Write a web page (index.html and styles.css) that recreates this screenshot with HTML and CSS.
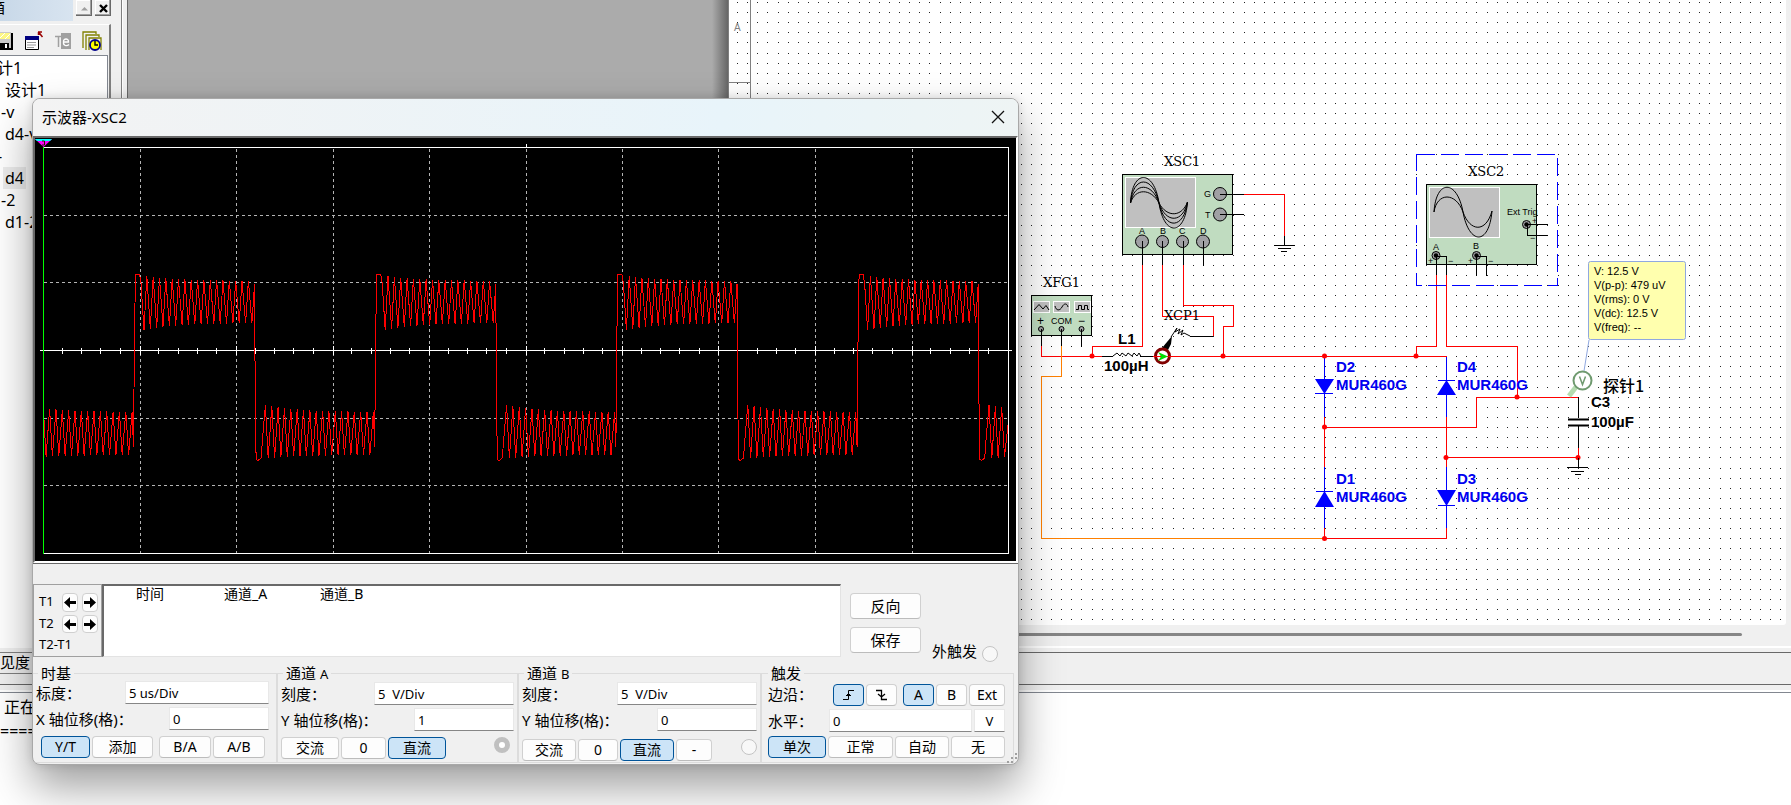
FILE: index.html
```html
<!DOCTYPE html>
<html lang="zh-CN">
<head>
<meta charset="utf-8">
<title>示波器-XSC2</title>
<link rel="stylesheet" href="styles.css">
</head>
<body>
<div class="app">
  <div class="main">
    <aside class="dock">
      <div class="dock-caption">
        <span class="dock-title">箱</span>
        <button class="cap-btn" aria-label="收起"><svg width="9" height="5" viewBox="0 0 9 5"><path d="M1 4.500L4.500 1L8 4.500Z" fill="#a0a0a0"/></svg></button>
        <button class="cap-btn" aria-label="关闭"><svg width="9" height="9" viewBox="0 0 9 9"><path d="M1 1L8 8M8 1L1 8" stroke="#000" stroke-width="2.400"/></svg></button>
      </div>
      <div class="dock-body">
        <div class="dock-tools">
          <button class="tool" aria-label="保存"><svg width="18" height="20" viewBox="0 0 18 20"><path d="M0 2H17V19H0Z" fill="#000"/><path d="M0 1H15V17H0Z" fill="#c8c8c8"/><path d="M0 2H14V8H0Z" fill="#fdf884"/><path d="M0 5L3 2M3 8L9 2M9 8L14 3" stroke="#fff"/><path d="M4 12H13V18H4Z" fill="#000"/><path d="M9 13H11V17H9Z" fill="#fff"/></svg></button>
          <button class="tool" aria-label="新建窗口"><svg width="20" height="20" viewBox="0 0 20 20"><path d="M1.500 5.500H14.500V18.500H1.500Z" fill="#fff" stroke="#000"/><path d="M1 5H15V9H1Z" fill="#000080"/><path d="M3 11.500H12M3 14H12M3 16.500H10" stroke="#999"/><path d="M14 1H18M14.500 1V4M14.500 1L18.500 6" stroke="#900" stroke-width="1.500"/></svg></button>
          <button class="tool" aria-label="重命名"><svg width="18" height="20" viewBox="0 0 18 20"><path d="M7 2H17V18H7Z" fill="#a0a0a0"/><path d="M1 5.500H8M4.500 5V16" stroke="#a0a0a0" stroke-width="1.500"/><path d="M9.500 11H14.500C15 7 9 7 9.500 11C9 15 13 15.500 15 13.500" fill="none" stroke="#fff" stroke-width="1.300"/></svg></button>
          <button class="tool" aria-label="历史"><svg width="20" height="20" viewBox="0 0 20 20"><path d="M1 17V1H14V3M4 19V4H17V6M7 19V7H19V19" fill="none" stroke="#808000" stroke-width="1.300"/><circle cx="13" cy="14" r="5" fill="#ff0" stroke="#00008b" stroke-width="1.800"/><path d="M13 10V14H16" fill="none" stroke="#000" stroke-width="1.400"/></svg></button>
        </div>
        <ul class="tree">
          <li class="cut">计1</li>
          <li>设计1</li>
          <li class="edge">-v</li>
          <li>d4-v</li>
          <li class="cut">-</li>
          <li><span class="picked">d4</span></li>
          <li class="edge">-2</li>
          <li>d1-2</li>
        </ul>
      </div>
    </aside>
    <div class="splitter"></div>
    <div class="workspace"></div>
    <section class="sheet">
      <div class="sheet-view">
        <svg class="schematic" viewBox="728 0 1058 625" preserveAspectRatio="xMinYMin slice">
          <path id="dots" fill="#222"/>
          <g class="thin" stroke="#808080"><path d="M750.500 0V120M728 82.500H750M728.500 0V120"/></g>
          <text x="734" y="31" class="zone">A</text>

          <g class="wire">
            <path d="M1244 194.500H1284.500V237M1142.500 265V346.500H1092.500V356M1162.500 265V316.500H1213.500V336M1183.500 265V305.500H1233.500V326.500H1223.500V356"/>
            <path d="M1041.500 346V356.500H1102M1153 356.500H1446.500M1436.500 275V346.500H1416.500V356M1446.500 275V346.500H1517.500V397"/>
            <path d="M1324.500 417V467M1324.500 427.500H1476.500V397.500H1578.500M1446.500 417V467M1446.500 457.500H1578.500V448M1324.500 528V538.500H1446.500V528"/>
          </g>
          <path class="wire orange" d="M1061.500 346V376.500H1041.500V538.500H1324"/>
          <path class="wire blue" d="M1324.500 357V417M1324.500 467V528M1446.500 357V417M1446.500 467V528M1315 393.500H1333M1316 491.500H1333M1438 380.500H1455M1438 505.500H1455"/>
          <path fill="#00f" d="M1315 379H1334L1324.500 394ZM1315 507H1334L1324.500 491ZM1437 395H1456L1446.500 380ZM1437 490H1456L1446.500 506Z"/>
          <g fill="#f00">
            <circle cx="1092" cy="356" r="2.500"/><circle cx="1223" cy="356" r="2.500"/><circle cx="1324.500" cy="356" r="2.500"/><circle cx="1416" cy="356" r="2.500"/><circle cx="1324.500" cy="427" r="2.500"/><circle cx="1446" cy="457.500" r="2.500"/><circle cx="1578" cy="457.500" r="2.500"/><circle cx="1517" cy="397" r="2.500"/><circle cx="1324.500" cy="538.500" r="2.500"/>
          </g>

          <g class="box"><path d="M1122.500 174.500H1232.500V254.500H1122.500Z"/><path d="M1031.500 295.500H1091.500V335.500H1031.500Z"/><path d="M1426.500 184.500H1536.500V264.500H1426.500Z"/></g>
          <g class="screen"><path d="M1125.500 177.500H1195.500V227.500H1125.500Z"/><path d="M1033.500 301.500H1049.500V312.500H1033.500Z"/><path d="M1053.500 301.500H1069.500V312.500H1053.500Z"/><path d="M1074.500 301.500H1090.500V312.500H1074.500Z"/><path d="M1429.500 187.500H1499.500V237.500H1429.500Z"/></g>
          <g class="trace">
            <path d="M1130.500 203C1132 169 1154 169 1159 203S1185 236 1187.500 202"/>
            <path d="M1130.500 203C1133 175 1153 175 1159 203S1184 229 1187.500 202"/>
            <path d="M1130.500 203C1134 182 1152 182 1159 203S1183 223 1187.500 202"/>
            <path d="M1130.500 203C1135 188 1151 188 1159 203S1182 217 1187.500 202"/>
            <path d="M1434 212C1436 179 1457 179 1463 212S1489 246 1492 211"/>
            <path d="M1434 212C1437 192 1456 192 1463 212S1486 233 1492 211"/>
            <path d="M1034 310L1039 304.500L1043 309L1046 305.500L1049 310M1055 306C1056 311 1060 311 1062 307S1067 303 1068 307M1076 309.500H1078.500V305.500H1081.500V309.500H1084.500V305.500H1087.500V309.500H1089"/>
          </g>
          <g class="knob"><circle cx="1220" cy="194" r="6.500"/><circle cx="1220" cy="214.500" r="6.500"/><circle cx="1142" cy="241.500" r="6.500"/><circle cx="1162.500" cy="241.500" r="6"/><circle cx="1182.500" cy="241.500" r="6"/><circle cx="1203" cy="241.500" r="6.500"/><circle cx="1041" cy="329" r="2.500"/><circle cx="1061.500" cy="329" r="2.500"/><circle cx="1081.500" cy="329" r="2.500"/><circle cx="1436" cy="255.500" r="4"/><circle cx="1476.500" cy="255.500" r="4"/><circle cx="1526.500" cy="224.500" r="4"/></g>
          <g><circle cx="1436" cy="255.500" r="2.200"/><circle cx="1476.500" cy="255.500" r="2.200"/><circle cx="1526.500" cy="224.500" r="2.200"/></g>
          <path class="wire black" d="M1220 194.500H1244M1220 214.500H1244M1142.500 241V265M1162.500 241V265M1183.500 241V265M1203.500 241V266M1041.500 329V346M1061.500 329V346M1081.500 329V347M1284.500 236V245M1274 245.500H1295M1278 248.500H1291M1281 251.500H1287M1102 356.500H1113M1140 356.500H1153M1436.500 256V275M1436 256.500H1446.500V275M1476.500 256V276M1476 256.500H1486.500V276M1527 224.500H1548M1527.500 225V235.500H1548M1213 336.500H1190M1578.500 397V418M1578.500 426V448M1578.500 458V467M1567 467.500H1588M1571 471.500H1584M1575 474.500H1581"/>
          <path d="M1568 418.500H1589V420.500H1568ZM1568 424.500H1589V426.500H1568Z"/>
          <path class="trace" d="M1113 356L1117 353L1120 356L1122 353L1126 356L1128 353L1132 356L1134 353L1137 356L1139 353L1141 356.500M1190 336L1184 333L1181 335L1183 330L1178 334L1180 329L1175 332L1177 328L1171 337"/>
          <path d="M1172 336L1171 344L1168 350L1162 348Z"/>
          <circle cx="1162.500" cy="356" r="7" fill="#fff" stroke="#800000" stroke-width="3"/>
          <path class="wire" d="M1153 356.500H1172"/>
          <path d="M1158 352L1168 356.500L1158 361L1161 356.500Z" fill="#0d0"/>
          <path class="wire blue" stroke-dasharray="18 6" d="M1416.500 154.500H1557.500V285.500H1416.500Z"/>

          <path d="M1589 340L1584 371" stroke="#90a8e0" fill="none"/>
          <rect x="1588.500" y="261.500" width="97" height="78" rx="2" fill="#ffffae" stroke="#90a8e0"/>
          <path d="M1576 387L1569 396" stroke="#b4dcb0" stroke-width="5"/>
          <circle cx="1582.500" cy="380.500" r="9" fill="#fff" stroke="#6f9a6f" stroke-width="2"/>
          <path d="M1579.500 376.500L1582.500 384.500L1585.500 376.500" fill="none" stroke="#6f9a6f" stroke-width="1.500"/>

          <g class="ref"><text x="1164" y="166">XSC1</text><text x="1043" y="287">XFG1</text><text x="1164" y="320">XCP1</text><text x="1468" y="176">XSC2</text></g>
          <g class="val"><text x="1118" y="344">L1</text><text x="1104" y="371">100µH</text><text x="1591" y="407">C3</text><text x="1591" y="427">100µF</text></g>
          <g class="val diode"><text x="1336" y="372">D2</text><text x="1336" y="390">MUR460G</text><text x="1336" y="484">D1</text><text x="1336" y="502">MUR460G</text><text x="1457" y="372">D4</text><text x="1457" y="390">MUR460G</text><text x="1457" y="484">D3</text><text x="1457" y="502">MUR460G</text></g>
          <g class="pin"><text x="1204" y="197">G</text><text x="1205" y="218">T</text><text x="1139" y="234">A</text><text x="1160" y="234">B</text><text x="1179" y="234">C</text><text x="1200" y="234">D</text><text x="1037" y="325" class="sign">+</text><text x="1051" y="324">COM</text><text x="1078" y="325" class="sign">−</text><text x="1433" y="250">A</text><text x="1473" y="249">B</text><text x="1507" y="215">Ext Trig</text><text x="1428" y="264">+</text><text x="1448" y="264">−</text><text x="1468" y="264">+</text><text x="1488" y="264">−</text><text x="1532" y="224">+</text><text x="1530" y="241">−</text></g>
          <g class="reading"><text x="1594" y="275">V: 12.5 V</text><text x="1594" y="289">V(p-p): 479 uV</text><text x="1594" y="303">V(rms): 0 V</text><text x="1594" y="317">V(dc): 12.5 V</text><text x="1594" y="331">V(freq): --</text></g>
          <text x="1603" y="392" class="probe">探针1</text>
        </svg>
      </div>
      <div class="hscroll"><div class="thumb"></div></div>
    </section>
  </div>
  <div class="strip"><span class="tab">见度</span></div>
  <div class="log"><p class="log-first">正在</p><p>====</p></div>
</div>

<div class="scope" role="dialog" aria-label="示波器-XSC2">
  <header class="titlebar">
    <h1>示波器-XSC2</h1>
    <button class="close" aria-label="关闭"><svg width="14" height="14" viewBox="0 0 14 14"><path d="M1 1L13 13M13 1L1 13" stroke="#111" stroke-width="1.300"/></svg></button>
  </header>
  <div class="crt-frame"><div class="crt">
    <svg class="plot" viewBox="35 138 981 423" preserveAspectRatio="none">
      <path d="M35 138H1016V561H35Z"/>
      <path id="grid" class="grid"/>
      <path class="white" d="M43 147.500H1008.500V553.500H43M526.500 144V147"/>
      <path id="axis" class="white"/>
      <path id="wave" class="wave"/>
      <path d="M43.500 147V554" stroke="#0f0" shape-rendering="crispEdges"/>
      <path d="M35 139H52L43.500 147Z" fill="#f0f"/><path d="M35 139H52L50 141H37Z" fill="#0ff"/><path d="M42 141H44.500V145H42" fill="none" stroke="#220"/>
    </svg>
  </div></div>

  <div class="readout">
    <div class="cursors">
      <span>T1</span>
      <button class="step" aria-label="T1 左移"><svg width="12" height="11" viewBox="0 0 12 11"><path d="M0 5.500L6 0V4H12V7H6V11Z"/></svg></button>
      <button class="step" aria-label="T1 右移"><svg width="12" height="11" viewBox="0 0 12 11"><path d="M12 5.500L6 0V4H0V7H6V11Z"/></svg></button>
      <span>T2</span>
      <button class="step" aria-label="T2 左移"><svg width="12" height="11" viewBox="0 0 12 11"><path d="M0 5.500L6 0V4H12V7H6V11Z"/></svg></button>
      <button class="step" aria-label="T2 右移"><svg width="12" height="11" viewBox="0 0 12 11"><path d="M12 5.500L6 0V4H0V7H6V11Z"/></svg></button>
      <span class="diff">T2-T1</span>
    </div>
    <div class="values">
      <table><thead><tr><th class="time">时间</th><th>通道_A</th><th>通道_B</th></tr></thead></table>
    </div>
    <div class="actions"><button class="btn tall">反向</button><button class="btn tall">保存</button></div>
    <div class="ext"><label for="ext">外触发</label><input type="radio" id="ext" class="port"></div>
  </div>

  <div class="groups">
    <fieldset class="timebase">
      <legend>时基</legend>
      <div class="row"><label for="tb">标度：</label><input id="tb" class="w144" value="5 us/Div"></div>
      <div class="row"><label for="xp">X 轴位移(格)：</label><input id="xp" class="w100" value="0"></div>
      <div class="row keys inset"><button class="btn on w49">Y/T</button><button class="btn w61">添加</button><button class="btn w52 apart">B/A</button><button class="btn w52">A/B</button></div>
    </fieldset>
    <fieldset>
      <legend>通道 <small>A</small></legend>
      <div class="row"><label for="ga">刻度：</label><input id="ga" class="w140" value="5  V/Div"></div>
      <div class="row"><label for="ya">Y 轴位移(格)：</label><input id="ya" class="w100" value="1"></div>
      <div class="row keys"><button class="btn w58">交流</button><button class="btn w45">0</button><button class="btn on w58">直流</button><input type="radio" class="port push" checked aria-label="通道 A 端口"></div>
    </fieldset>
    <fieldset>
      <legend>通道 <small>B</small></legend>
      <div class="row"><label for="gb">刻度：</label><input id="gb" class="w140" value="5  V/Div"></div>
      <div class="row"><label for="yb">Y 轴位移(格)：</label><input id="yb" class="w100" value="0"></div>
      <div class="row keys low"><button class="btn w54">交流</button><button class="btn w40">0</button><button class="btn on w54">直流</button><button class="btn w36">-</button><input type="radio" class="port push" aria-label="通道 B 端口"></div>
    </fieldset>
    <fieldset class="trigger">
      <legend>触发</legend>
      <div class="row edge-row"><span class="name">边沿：</span><div class="edges">
        <button class="btn on w31" aria-label="上升沿"><svg width="12" height="12" viewBox="0 0 12 12"><path d="M0 10.500H5.500V1.500H11M3 6.500H8M4 5.500H7" fill="none" stroke="#000"/></svg></button>
        <button class="btn w31" aria-label="下降沿"><svg width="12" height="12" viewBox="0 0 12 12"><path d="M0 1.500H5.500V10.500H11M2 5L5.500 8L9 5" fill="none" stroke="#000" stroke-width="1.300"/></svg></button>
        <button class="btn on w31 apart">A</button><button class="btn w31">B</button><button class="btn w36">Ext</button></div></div>
      <div class="row level"><label for="lv">水平：</label><input id="lv" class="grow" value="0"><input class="unit" value="V" aria-label="单位"></div>
      <div class="row keys"><button class="btn on w58">单次</button><button class="btn w65">正常</button><button class="btn w54">自动</button><button class="btn w54">无</button></div>
    </fieldset>
  </div>
  <svg class="grip" width="10" height="10" viewBox="0 0 10 10"><path d="M8 0H10V2H8ZM4 4H6V6H4ZM8 4H10V6H8ZM0 8H2V10H0ZM4 8H6V10H4Z" fill="#a0a0a0"/></svg>
</div>
<script src="draw.js"></script>
</body>
</html>
```
FILE: styles.css
```css
* { box-sizing: border-box; }
body {
  margin: 0;
  height: 100vh;
  overflow: hidden;
  background: #fff;
  color: #000;
  font: 13px/16px "Noto Sans", "Noto Sans CJK SC", sans-serif;
}
button, input { font: inherit; color: inherit; }
button { padding: 0; cursor: default; }

/* Main application */
.app { display: flex; flex-direction: column; height: 100vh; }
.main { display: flex; flex: 0 0 648px; background: #f0f0f0; }
.dock { width: 111px; display: flex; flex-direction: column; overflow: hidden; }
.dock-caption { display: flex; gap: 3px; height: 24px; }
.dock-title {
  width: 74px;
  height: 21px;
  text-indent: -10px;
  font-size: 15px;
  line-height: 14px;
  background: linear-gradient(90deg, #c8d8e8, #d8e4f0);
}
.cap-btn {
  display: grid;
  place-items: center;
  width: 16px;
  height: 16px;
  border: 0;
  background: #f0f0f0;
  box-shadow: inset -1px -1px #696969, inset -2px -2px #a0a0a0, inset 1px 1px #fff;
}
.dock-body { flex: 1; display: flex; flex-direction: column; border-top: 1px solid #fff; border-right: 2px solid #808080; }
.dock-tools { display: flex; gap: 10px; height: 30px; padding: 6px 0 0; margin-left: -4px; }
.tool { border: 0; background: none; height: 20px; }
.tree {
  flex: 1;
  width: 108px;
  margin: 0;
  padding: 1px 0 0 5px;
  list-style: none;
  background: #fff;
  border-top: 1px solid #828790;
  border-right: 1px solid #828790;
  font-size: 16px;
  line-height: 22px;
  white-space: nowrap;
}
.tree .cut { margin-left: -8px; }
.tree .edge { margin-left: -4px; }
.picked { display: inline-block; background: #ececec; margin-left: -2px; padding: 0 2px; }
.splitter { width: 17px; border: solid #696969; border-width: 0 1px 0 0; background: linear-gradient(90deg, #f0f0f0 10px, #808080 10px 11px, #fff 11px 12px, #f0f0f0 12px); }
.workspace { width: 600px; background: linear-gradient(90deg, #ababab calc(100% - 16px), #666); }
.sheet { flex: 1; min-width: 0; display: flex; flex-direction: column; }
.sheet-view { flex: 1; min-height: 0; margin-right: 5px; background: #fff; border-radius: 0 0 3px 0; overflow: hidden; }
.hscroll { height: 23px; padding: 8px 49px 0 0; border-bottom: 2px solid #fff; }
.thumb { height: 3px; background: #868686; border-radius: 0 2px 2px 0; }
.strip {
  flex: 0 0 45px;
  padding-top: 4px;
  background: linear-gradient(#f0f0f0 4px, #696969 4px 5px, #f0f0f0 5px 36px, #696969 36px 37px, #f0f0f0 37px 42px, #fff 42px 44px, #828790 44px);
}
.tab { display: block; width: 36px; height: 22px; border: 1px solid #808080; border-left: 0; font-size: 15px; line-height: 18px; }
.log { flex: 1; background: #fff; font-size: 16px; line-height: 24px; overflow: hidden; }
.log p { margin: 0; }
.log-first { padding: 2px 0 0 4px; }

/* Schematic drawing */
.schematic { display: block; width: 100%; height: 100%; }
.thin, .wire { fill: none; shape-rendering: crispEdges; }
.wire { stroke: #f00; }
.wire.orange { stroke: #ff8000; }
.wire.blue { stroke: #00f; }
.wire.black { stroke: #000; }
.box { fill: #c0dcc0; stroke: #000; shape-rendering: crispEdges; }
.screen { fill: #c0c0c0; stroke: #fff; shape-rendering: crispEdges; }
.trace { fill: none; stroke: #000; stroke-width: 1; }
.knob { fill: #a0a0a4; stroke: #000; }
.zone { fill: #808080; font: 10px "Liberation Sans", sans-serif; }
.ref { font: 13px "DejaVu Serif", serif; }
.val { font: bold 15px "Liberation Sans", sans-serif; }
.diode { fill: #0000f0; }
.pin { font: 9px "Liberation Sans", sans-serif; }
.sign { font-size: 12px; }
.reading { font: 11px "Liberation Sans", sans-serif; }
.probe { font: 500 16px "Noto Sans CJK SC", sans-serif; }

/* Oscilloscope window */
.scope {
  position: absolute;
  left: 32px;
  top: 98px;
  width: calc(100% - 804px);
  border: 1px solid #a8a8a8;
  border-radius: 8px;
  background: #f0f0f0;
  box-shadow: 0 22px 44px rgba(0, 0, 0, 0.38), 0 0 10px rgba(0, 0, 0, 0.12);
  overflow: hidden;
}
.titlebar {
  display: flex;
  align-items: center;
  justify-content: space-between;
  height: 37px;
  padding: 0 13px 2px 9px;
  background: linear-gradient(90deg, #f3f3f3, #e8f4fa 70%, #eef4f4);
}
.titlebar h1 { margin: 0; font-size: 15px; font-weight: 400; }
.close { border: 0; background: none; height: 14px; }
.close svg { display: block; }
.crt-frame { border-bottom: 1px solid #696969; }
.crt { border: 2px solid; border-color: #696969 #fff #fff #696969; }
.plot { display: block; width: 100%; height: 423px; }
.grid { fill: none; stroke: #b4b4b4; stroke-dasharray: 3 3; shape-rendering: crispEdges; }
.white { fill: none; stroke: #fff; shape-rendering: crispEdges; }
.wave { fill: none; stroke: #f00; shape-rendering: crispEdges; }

.readout { display: flex; height: 73px; margin-top: 20px; }
.cursors {
  display: grid;
  grid-template-columns: 19px 16px 16px;
  grid-template-rows: 19px 18px 20px;
  column-gap: 4px;
  row-gap: 3px;
  width: 69px;
  padding: 8px 0 0 5px;
  border: 1px solid #a0a0a0;
}
.diff { grid-column: 1 / -1; }
.step { display: grid; place-items: center; border: 1px solid #d0d0d0; border-radius: 4px; background: #fdfdfd; }
.values { flex: 1; border: solid; border-width: 2px 1px 1px 2px; border-color: #696969 #e3e3e3 #e3e3e3 #696969; background: #fff; }
.values table { border-collapse: collapse; margin-left: 32px; }
.values th { min-width: 96px; padding: 0; font-size: 14px; font-weight: 400; text-align: left; }
.values .time { min-width: 88px; }
.actions { display: flex; flex-direction: column; gap: 8px; width: 80px; padding: 9px 0 0 9px; }
.ext { display: flex; align-items: flex-end; gap: 5px; padding: 0 20px 0 11px; height: 78px; font-size: 15px; }
.ext label { padding-bottom: 3px; }

.btn {
  height: 22px;
  border: 1px solid #d0d0d0;
  border-bottom-color: #bcbcbc;
  border-radius: 4px;
  background: #fdfdfd;
  font-size: 14px;
  line-height: 18px;
}
.btn.on { background: #cce4f7; border-color: #005499; }
.btn.tall { height: 26px; font-size: 15px; }
.port {
  appearance: none;
  width: 16px;
  height: 16px;
  margin: 0;
  border: 1px solid #c4c4c4;
  border-radius: 50%;
  background: #f8f8f8;
}
.port:checked { border: 5px solid #c0c0c0; background: #fff; margin-right: 4px; }
.push { margin-left: auto; }

.groups { display: grid; grid-template-columns: 244fr 241fr 243fr 253fr; margin: 8px 4px 1px 0; }
fieldset { min-width: 0; margin: 0; padding: 0 3px 1px 3px; border: 1px solid #dcdcdc; border-left-width: 0; }
fieldset + fieldset { border-left-width: 1px; }
fieldset:last-child { border-right-width: 1px; }
legend { margin-left: 2px; padding: 0 3px; font-size: 15px; line-height: 16px; }
legend small { font-size: 13px; }
.row { display: flex; align-items: center; justify-content: space-between; height: 23px; margin-bottom: 3px; font-size: 15px; white-space: nowrap; }
.row input:not(.port) {
  height: 23px;
  padding: 0 3px;
  border: 1px solid #e8e8e8;
  border-bottom-color: #868686;
  background: #fff;
  font-size: 13px;
}
.row .w100, .row .w140, .row .w144 { white-space: pre; }
.keys { align-items: flex-start; justify-content: flex-start; gap: 2px; height: 27px; padding-top: 3px; margin: 0; }
.keys.inset { padding-left: 5px; }
.keys.low { padding-top: 5px; }
.timebase { padding-right: 7px; }
.edge-row { align-items: flex-end; height: 25px; }
.edge-row .name { padding-bottom: 4px; }
.edges { display: flex; gap: 2px; padding-right: 5px; }
.edges svg { display: block; margin: auto; }
.apart { margin-left: 4px; }
.trigger { padding-left: 6px; }
.trigger legend { margin-left: 0; }
.level { gap: 2px; padding-right: 5px; }
.trigger .keys { padding-top: 1px; height: 25px; }
.level label { width: 59px; }
.row .grow { flex: 1; min-width: 0; }
.row .unit { width: 31px; text-align: center; }
.w31 { width: 31px; }
.w36 { width: 36px; }
.w40 { width: 40px; }
.w45 { width: 45px; }
.w49 { width: 49px; }
.w52 { width: 52px; }
.w54 { width: 54px; }
.w58 { width: 58px; }
.w61 { width: 61px; }
.w65 { width: 65px; }
.w100 { width: 100px; }
.w140 { width: 140px; }
.w144 { width: 144px; }
.grip { position: absolute; right: 1px; bottom: 1px; }
```
FILE: draw.js
```js
// Snap-grid dots of the drawing sheet
let dots = '';
for (let r = 0; r < 62; r++) {
  for (let c = 0; c < 104; c++) {
    const x = Math.round(737 + c * 10.13);
    const y = Math.round(2 + r * 10.12);
    dots += `M${x} ${y}h1v1h-1z`;
  }
}
document.getElementById('dots').setAttribute('d', dots);

// Oscilloscope graticule: 10 by 6 divisions
const left = 43.5, mid = 350.5, divX = 96.5;
const columns = [140, 236, 333, 429, 526, 622, 718, 815, 912];
const rows = [215, 282, 418, 485];
let grid = '';
for (const x of columns) grid += `M${x + 0.5} 149V553`;
for (const y of rows) grid += `M44 ${y + 0.5}H1008`;
document.getElementById('grid').setAttribute('d', grid);

let axis = `M40 ${mid}H1012`;
for (let i = 1; i < 50; i++) {
  const half = i % 5 ? 3 : 4.5;
  const x = i % 5 ? Math.floor(left + i * divX / 5 - 0.6) : columns[i / 5 - 1];
  axis += `M${x + 0.5} ${mid - half}v${half * 2}`;
}
document.getElementById('axis').setAttribute('d', axis);

// Square wave with ringing on both levels
const period = 6.35, halfWave = 120.6, end = 1008;
const pts = [];
const push = (x, y) => { if (x >= 43 && x <= end) pts.push(`${x.toFixed(1)} ${y.toFixed(1)}`); };
let start = 134.5 - halfWave;
let high = false;
while (start < end) {
  const stop = start + halfWave;
  if (high) {
    push(start, 333); push(start + 1, 274.5); push(start + 5, 274.5); push(start + 6.5, 283);
    for (let k = 0, x = start + 9.5; x < stop - 2; x += period, k++) {
      const decay = Math.exp(-k / 5);
      push(x, 323 + 7 * decay);
      if (x + 2.8 < stop - 1) push(x + 2.8, 281 - 5 * decay);
    }
    push(stop - 0.5, 284);
  } else {
    push(start, 378); push(start + 1, 459.5); push(start + 3, 460.5); push(start + 6, 458); push(start + 7.5, 438);
    for (let k = 0, x = start + 10.3; x < stop - 2; x += period, k++) {
      const decay = Math.exp(-k / 5);
      push(x, 412 - 7 * decay);
      if (x + 2.8 < stop - 1) push(x + 2.8, 455 + 3 * decay);
    }
    push(stop - 1, 447);
  }
  high = !high;
  start = stop;
}
push(end, 425);
document.getElementById('wave').setAttribute('d', 'M' + pts.join('L'));
```
